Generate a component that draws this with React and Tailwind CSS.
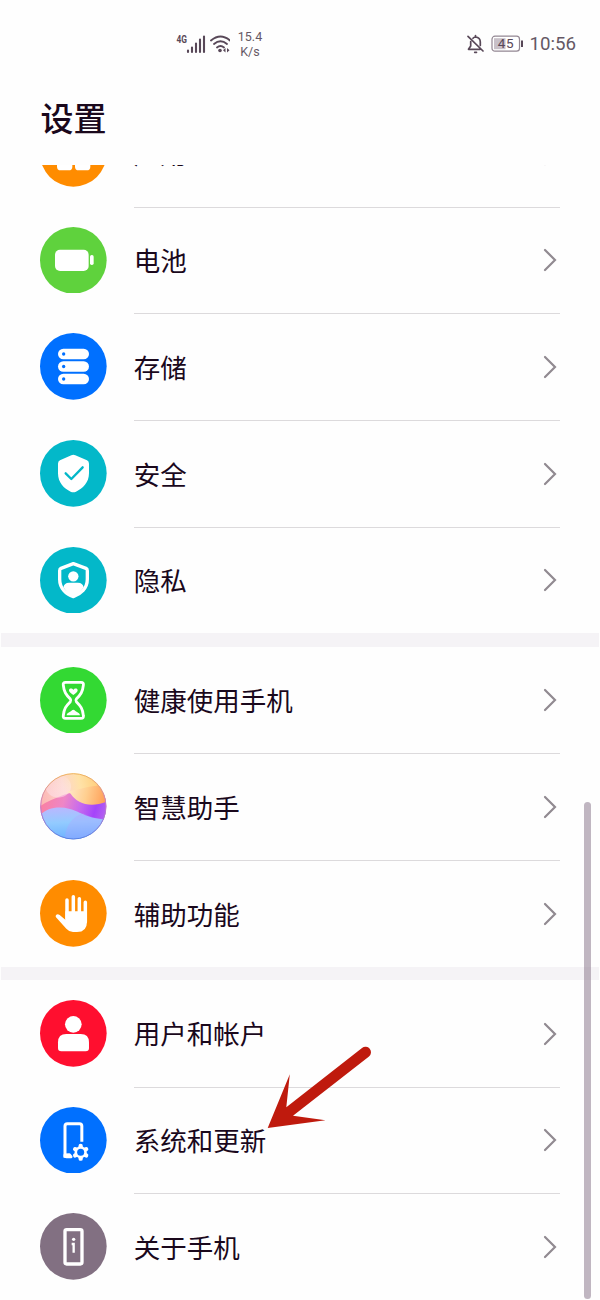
const ink = '#584858'

function Disc({ color, children }) {
  return (
    <svg viewBox="0 0 200 200" className="size-[66.67px] shrink-0">
      <circle cx="100" cy="100" r="100" fill={color} />
      {children}
    </svg>
  )
}

function AppsIcon() {
  return (
    <Disc color="#ff8c00">
      <g fill="#fff">
        <rect x="51" y="51" width="46" height="46" rx="11" />
        <rect x="105" y="51" width="46" height="46" rx="11" />
        <rect x="51" y="105" width="46" height="46" rx="11" />
        <rect x="105" y="105" width="46" height="46" rx="11" />
      </g>
    </Disc>
  )
}

function BatteryIcon() {
  return (
    <Disc color="#5fd23d">
      <rect x="45" y="68" width="101" height="64" rx="15" fill="#fff" />
      <rect x="150" y="84" width="11" height="30" rx="5" fill="#fff" />
    </Disc>
  )
}

function StorageIcon() {
  return (
    <Disc color="#0070ff">
      {[47, 84.5, 122].map(y => (
        <g key={y}>
          <rect x="54" y={y} width="93" height="32" rx="16" fill="#fff" />
          <circle cx="71" cy={y + 16} r="5" fill="#0070ff" />
        </g>
      ))}
    </Disc>
  )
}

function SecurityIcon() {
  return (
    <Disc color="#03b8c9">
      <path d="M94 46Q100 43 106 46L141 61Q147 64 147 71V100C147 128 128 146 108 155Q100 159 92 155C72 146 54 128 54 100V71Q54 64 60 61Z" fill="#fff" />
      <path d="M77 100L94 117L128 82" fill="none" stroke="#03b8c9" strokeWidth="7" strokeLinecap="round" strokeLinejoin="round" />
    </Disc>
  )
}

function PrivacyIcon() {
  return (
    <Disc color="#03b8c9">
      <path d="M100 50L138 64Q142 66 142 71V97C142 124 122 142 100 149C78 142 59 124 59 97V71Q59 66 63 64Z" fill="none" stroke="#fff" strokeWidth="10" strokeLinejoin="round" />
      <circle cx="100" cy="88" r="15.5" fill="#fff" />
      <path d="M70 121Q73 107 87 107H114Q128 107 131 121Q118 141 100 149Q83 141 70 121Z" fill="#fff" />
    </Disc>
  )
}

function HourglassIcon() {
  return (
    <Disc color="#33d933">
      <path d="M77 46H123Q132 46 130 55C128 75 122 83 109 96Q106 100 109 104C122 117 128 125 130 145Q132 154 123 154H77Q68 154 70 145C72 125 78 117 91 104Q94 100 91 96C78 83 72 75 70 55Q68 46 77 46Z" fill="none" stroke="#fff" strokeWidth="8.5" strokeLinejoin="round" />
      <path d="M100 84C93 79 86 74 87 69C89 63 97 64 100 69C103 64 111 63 113 69C114 74 107 79 100 84Z" fill="#fff" />
      <path d="M80 145C81 137 91 136 96 130Q100 126 104 130C109 136 119 137 120 145Z" fill="#fff" />
    </Disc>
  )
}

function AssistantIcon() {
  return (
    <svg viewBox="0 0 200 200" className="size-[66.67px] shrink-0">
      <defs>
        <clipPath id="orb"><circle cx="100" cy="100" r="99" /></clipPath>
        <linearGradient id="sky" x1="0" y1="0.3" x2="1" y2="0.1">
          <stop offset="0" stopColor="#fcb6b4" />
          <stop offset="0.35" stopColor="#fdd5cc" />
          <stop offset="0.6" stopColor="#ffe2a8" />
          <stop offset="1" stopColor="#ffc566" />
        </linearGradient>
        <linearGradient id="peach" x1="0" y1="0.2" x2="1" y2="0.3">
          <stop offset="0" stopColor="#ffe9cb" />
          <stop offset="0.5" stopColor="#ffcf90" />
          <stop offset="1" stopColor="#ff9f58" />
        </linearGradient>
        <linearGradient id="wave" gradientUnits="userSpaceOnUse" x1="0" y1="70" x2="200" y2="125">
          <stop offset="0" stopColor="#fb7f9c" />
          <stop offset="0.35" stopColor="#ee86c6" />
          <stop offset="0.6" stopColor="#c66aee" />
          <stop offset="0.82" stopColor="#a544fa" />
          <stop offset="1" stopColor="#b565ee" />
        </linearGradient>
        <linearGradient id="sea" x1="0.4" y1="0" x2="0.5" y2="1">
          <stop offset="0" stopColor="#b9b8ff" />
          <stop offset="0.45" stopColor="#93cbff" />
          <stop offset="1" stopColor="#6bb0ff" />
        </linearGradient>
        <linearGradient id="fade" x1="0" y1="0" x2="0" y2="1">
          <stop offset="0" stopColor="#fff" stopOpacity="0.1" />
          <stop offset="1" stopColor="#ffe0ee" stopOpacity="0.55" />
        </linearGradient>
        <linearGradient id="rim" x1="0" y1="0" x2="0" y2="1">
          <stop offset="0" stopColor="#efb45d" />
          <stop offset="0.5" stopColor="#c879ce" />
          <stop offset="1" stopColor="#5682e4" />
        </linearGradient>
      </defs>
      <g clipPath="url(#orb)">
        <rect width="200" height="200" fill="url(#sky)" />
        <path d="M0 100C22 84 45 76 70 66C110 52 150 48 200 60V150H0Z" fill="url(#wave)" />
        <ellipse cx="55" cy="40" rx="38" ry="34" fill="url(#fade)" />
        <path d="M82 55C120 52 150 34 200 38V86C150 105 112 92 92 62Z" fill="url(#peach)" />
        <path d="M0 128C22 102 58 100 90 108C122 117 145 138 200 139V200H0Z" fill="url(#sea)" />
        <path d="M75 200C74 160 98 130 130 121Q158 137 200 139V200Z" fill="#b79cff" opacity="0.28" />
      </g>
      <circle cx="100" cy="100" r="98" fill="none" stroke="url(#rim)" strokeWidth="3" />
    </svg>
  )
}

function HandIcon() {
  return (
    <Disc color="#ff8c00">
      <path d="M81 60V115M100 50V115M118 56V115M136 67V125" stroke="#fff" strokeWidth="10.5" strokeLinecap="round" />
      <path d="M76 94H141V125Q141 156 111 156H99Q88 156 79 146L48 112Q45 107 49 104Q53 101 59 105L76 119Z" fill="#fff" />
    </Disc>
  )
}

function UserIcon() {
  return (
    <Disc color="#ff0f2f">
      <circle cx="100" cy="73" r="25" fill="#fff" />
      <path d="M54 127Q54 102 79 102H122Q147 102 147 127V144Q147 154 137 154H64Q54 154 54 144Z" fill="#fff" />
    </Disc>
  )
}

function SystemIcon() {
  return (
    <Disc color="#0070ff">
      <path d="M125.5 104V57Q125.5 50 118.5 50H82Q75 50 75 57V148H91" fill="none" stroke="#fff" strokeWidth="9" />
      <path d="M75 144V148Q75 149 80 149H93L88 143Z" fill="#fff" stroke="#fff" strokeWidth="9" strokeLinejoin="round" />
      <g stroke="#fff" strokeWidth="13" strokeLinecap="round">
        <path d="M122 117V155M105.5 126.5L138.5 145.5M105.5 145.5L138.5 126.5" />
      </g>
      <circle cx="122" cy="136" r="18" fill="#fff" />
      <circle cx="122" cy="136" r="10.5" fill="#0070ff" />
    </Disc>
  )
}

function AboutIcon() {
  return (
    <Disc color="#827082">
      <rect x="75" y="50" width="51" height="103" rx="5" fill="none" stroke="#fff" strokeWidth="10" />
      <circle cx="101" cy="79" r="5" fill="#fff" />
      <path d="M95 93H101V119" fill="none" stroke="#fff" strokeWidth="7" />
    </Disc>
  )
}

const groups = [
  [
    { label: '应用', Icon: AppsIcon, labelClass: 'pb-0.5' },
    { label: '电池', Icon: BatteryIcon },
    { label: '存储', Icon: StorageIcon },
    { label: '安全', Icon: SecurityIcon },
    { label: '隐私', Icon: PrivacyIcon },
  ],
  [
    { label: '健康使用手机', Icon: HourglassIcon },
    { label: '智慧助手', Icon: AssistantIcon },
    { label: '辅助功能', Icon: HandIcon },
  ],
  [
    { label: '用户和帐户', Icon: UserIcon },
    { label: '系统和更新', Icon: SystemIcon },
    { label: '关于手机', Icon: AboutIcon },
  ],
]

function Row({ label, Icon, divider, labelClass = '' }) {
  return (
    <div className="flex h-[106.667px] items-center gap-[27px] pl-10 pr-10">
      <Icon />
      <div className={`flex h-full flex-1 items-center justify-between border-t ${divider ? 'border-[#dcdadc]' : 'border-transparent'}`}>
        <span className={`text-[26.5px] leading-none text-[#1a081c] ${labelClass}`}>{label}</span>
        <svg viewBox="0 0 14 24" className="mr-[3px] h-6 w-3.5">
          <path d="M2 2L12 12L2 22" fill="none" stroke="#918a91" strokeWidth="2.2" strokeLinecap="round" />
        </svg>
      </div>
    </div>
  )
}

function StatusBar() {
  return (
    <div className="flex h-[88px] items-center justify-between pl-[176px] pr-6 font-[Roboto,sans-serif] text-[#655865]">
      <div className="flex items-center">
        <svg width="54" height="24" viewBox="0 0 54 24">
          <text x="0.5" y="11" fontSize="10" fontWeight="700" fill={ink} textLength="10.5" lengthAdjust="spacingAndGlyphs">4G</text>
          <path d="M12 20V18.5M16 20V15.5M20 20V11.5M24 20V7.5M28 20V4.5" stroke={ink} strokeWidth="2.1" strokeLinecap="round" />
          <g fill="none" stroke={ink} strokeWidth="1.9" strokeLinecap="round">
            <path d="M35 8.5Q44.5 0.5 54 8.5" />
            <path d="M38 12Q44.5 6.5 51 12" />
            <path d="M41 15.5Q44.5 12.5 48 15.5" />
          </g>
          <circle cx="44" cy="18.5" r="1.8" fill={ink} />
          <path d="M49.5 16V20.5L47 18.3ZM51 16V20.5L53.5 18.3Z" fill={ink} />
        </svg>
        <div className="ml-[6px] w-7 text-center text-[12.5px] leading-[15px]">
          <div>15.4</div>
          <div>K/s</div>
        </div>
      </div>
      <div className="flex items-center">
        <svg width="18" height="20" viewBox="0 0 18 20" fill="none" stroke={ink} strokeWidth="1.7" strokeLinecap="round" strokeLinejoin="round">
          <path d="M6 4.3Q7 3.2 8.5 3V1.5V3Q13.3 3.5 13.3 8V11.5M3.7 7.5V12L1.5 15.3H13M1 2.3L16 17M7.7 18.3H9.5" />
        </svg>
        <svg width="32" height="18" viewBox="0 0 32 18" className="ml-[6px]">
          <rect x="1" y="1.2" width="27.5" height="15" rx="3" fill="#fff" stroke="#938793" strokeWidth="1.2" />
          <rect x="3" y="3.2" width="11.5" height="11" fill="#c8c0c8" />
          <path d="M31 5.5V12" stroke={ink} strokeWidth="2" />
          <text x="14.7" y="13.4" textAnchor="middle" fontSize="13.5" fill={ink} textLength="16">45</text>
        </svg>
        <span className="ml-[6px] text-[18.7px] leading-none">10:56</span>
      </div>
    </div>
  )
}

export default function App() {
  return (
    <main className="relative flex h-[1300px] w-[600px] flex-col overflow-hidden bg-[#fefefe] font-['Noto_Sans_CJK_SC',sans-serif]">
      <StatusBar />
      <h1 className="h-[77px] shrink-0 pl-[40.5px] text-[33px] font-medium leading-[58px] text-[#1a081c]">设置</h1>

      <div className="flex-1 overflow-hidden">
        <div className="-mt-[65px]">
          {groups.map((rows, i) => (
            <section key={i}>
              {i > 0 && <div className="mx-px h-[13.333px] bg-[#f5f3f6]" />}
              {rows.map((row, j) => (
                <Row key={row.label} {...row} divider={j > 0} />
              ))}
            </section>
          ))}
        </div>
      </div>

      <div className="absolute right-[9.5px] top-[802px] h-[497px] w-[7px] rounded-full bg-[#8c7a8e]/55" />

      <svg viewBox="0 0 110 90" className="absolute left-[264px] top-[1042px] h-[90px] w-[110px]">
        <path d="M3.7 86L25.8 32.3L22.3 65.3L98 6A5.5 5.5 0 0 1 105 14.5L29 73.7L61.5 78.3Z" fill="#bf1a0d" />
      </svg>
    </main>
  )
}
